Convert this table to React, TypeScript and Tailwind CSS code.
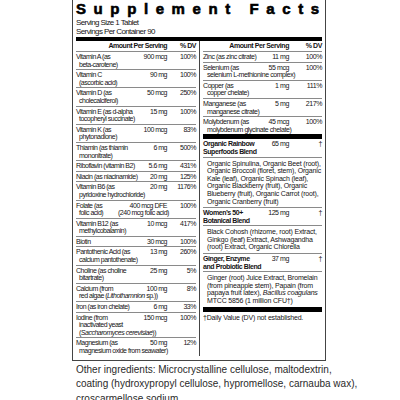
import type { ReactNode } from "react"

type Fact = {
  name: ReactNode
  amt: string
  dv: string
  more?: ReactNode[]
  bold?: boolean
}

const leftRows: Fact[] = [
  { name: "Vitamin A (as", amt: "900 mcg", dv: "100%", more: ["beta-carotene)"] },
  { name: "Vitamin C", amt: "90 mg", dv: "100%", more: ["(ascorbic acid)"] },
  { name: "Vitamin D (as", amt: "50 mcg", dv: "250%", more: ["cholecalciferol)"] },
  { name: "Vitamin E (as d-alpha", amt: "15 mg", dv: "100%", more: ["tocopheryl succinate)"] },
  { name: "Vitamin K (as", amt: "100 mcg", dv: "83%", more: ["phytonadione)"] },
  { name: "Thiamin (as thiamin", amt: "6 mg", dv: "500%", more: ["mononitrate)"] },
  { name: "Riboflavin (vitamin B2)", amt: "5.6 mg", dv: "431%" },
  { name: "Niacin (as niacinamide)", amt: "20 mg", dv: "125%" },
  { name: "Vitamin B6 (as", amt: "20 mg", dv: "1176%", more: ["pyridoxine hydrochloride)"] },
  {
    name: "Folate (as",
    amt: "400 mcg DFE",
    dv: "100%",
    more: [
      <span className="flex">
        <span className="w-[39px]">folic acid)</span>
        <span>(240 mcg folic acid)</span>
      </span>,
    ],
  },
  { name: "Vitamin B12 (as", amt: "10 mcg", dv: "417%", more: ["methylcobalamin)"] },
  { name: "Biotin", amt: "30 mcg", dv: "100%" },
  { name: "Pantothenic Acid (as", amt: "13 mg", dv: "260%", more: ["calcium pantothenate)"] },
  { name: "Choline (as choline", amt: "25 mg", dv: "5%", more: ["bitartrate)"] },
  {
    name: "Calcium (from",
    amt: "100 mg",
    dv: "8%",
    more: [<>red algae (<i>Lithothamnion</i> sp.))</>],
  },
  { name: "Iron (as iron chelate)", amt: "6 mg", dv: "33%" },
  {
    name: "Iodine (from",
    amt: "150 mcg",
    dv: "100%",
    more: ["inactivated yeast", <>(<i>Saccharomyces cerevisiae</i>))</>],
  },
  { name: "Magnesium (as", amt: "50 mg", dv: "12%", more: ["magnesium oxide from seawater)"] },
]

const minerals: Fact[] = [
  { name: "Zinc (as zinc citrate)", amt: "11 mg", dv: "100%" },
  { name: "Selenium (as", amt: "55 mcg", dv: "100%", more: ["selenium L-methionine complex)"] },
  { name: "Copper (as", amt: "1 mg", dv: "111%", more: ["copper chelate)"] },
  { name: "Manganese (as", amt: "5 mg", dv: "217%", more: ["manganese citrate)"] },
  { name: "Molybdenum (as", amt: "45 mcg", dv: "100%", more: ["molybdenum glycinate chelate)"] },
]

function FactRow({ row, dvW, indent, last }: { row: Fact; dvW: string; indent: string; last?: boolean }) {
  return (
    <div className={`py-[1px] ${last ? "" : "border-b border-[#8a8a8a]"}`}>
      <div className="flex leading-[7.6px]">
        <span className={`flex-1 min-w-0 whitespace-nowrap ${row.bold ? "font-bold" : ""}`}>{row.name}</span>
        <span className="whitespace-nowrap">{row.amt}</span>
        <span className={`${dvW} text-right`}>{row.dv}</span>
      </div>
      {row.more?.map((m, i) => (
        <div key={i} className={`${row.bold ? "font-bold" : indent} whitespace-nowrap leading-[7.6px]`}>
          {m}
        </div>
      ))}
    </div>
  )
}

function HeaderRow({ dvW }: { dvW: string }) {
  return (
    <div className="flex h-[11px] leading-[10px] border-b border-[#8a8a8a] font-bold">
      <span className="flex-1 text-right">Amount Per Serving</span>
      <span className={`${dvW} text-right`}>% DV</span>
    </div>
  )
}

// ingredient lists under each blend are set a bit wider than the table rows
function BlendText({ lines, last }: { lines: ReactNode[]; last?: boolean }) {
  return (
    <div className={`pl-[4px] py-[2px] leading-[7.6px] tracking-[-0.025em] ${last ? "" : "border-b border-[#8a8a8a]"}`}>
      {lines.map((l, i) => (
        <div key={i} className="whitespace-nowrap">{l}</div>
      ))}
    </div>
  )
}

export default function App() {
  return (
    <div className="w-[400px] h-[400px] overflow-hidden bg-white text-[#161415] font-['Liberation_Sans',Arial,sans-serif]">
      <div className="ml-[72px] w-[254px] border-x border-b border-[#444] px-[3px] pb-[4px]">
        <div className="h-[18px] text-[15px] leading-[17px] font-bold tracking-[7.6px] whitespace-nowrap text-black [-webkit-text-stroke:0.6px_black]">
          Supplement Facts
        </div>
        <div className="text-[8px] leading-[9px] tracking-[-0.075em]">
          <div>Serving Size 1 Tablet</div>
          <div>Servings Per Container 90</div>
        </div>
        <div className="mt-[1px] h-[4px] bg-black" />

        <div className="flex text-[7px]">
          {/* vitamins column */}
          <div className="w-[120px] tracking-[-0.07em]">
            <HeaderRow dvW="w-[29px]" />
            {leftRows.map((r, i) => (
              <FactRow key={i} row={r} dvW="w-[29px]" indent="pl-[3px]" last={i === leftRows.length - 1} />
            ))}
          </div>

          <div className="w-[7px] flex justify-center">
            <div className="w-px bg-[#444]" />
          </div>

          {/* minerals + blends column */}
          <div className="w-[119px] tracking-[-0.06em]">
            <HeaderRow dvW="w-[33px]" />
            {minerals.map((r, i) => (
              <FactRow key={i} row={r} dvW="w-[33px]" indent="pl-[4px]" last={i === minerals.length - 1} />
            ))}
            <div className="h-[5px] bg-black" />

            <FactRow
              row={{ name: "Organic Rainbow", amt: "65 mg", dv: "†", bold: true, more: ["Superfoods Blend"] }}
              dvW="w-[33px]"
              indent=""
            />
            <BlendText
              lines={[
                "Organic Spinulina, Organic Beet (root),",
                "Organic Broccoli (floret, stem), Organic",
                "Kale (leaf), Organic Spinach (leaf),",
                "Organic Blackberry (fruit), Organic",
                "Blueberry (fruit), Organic Carrot (root),",
                "Organic Cranberry (fruit)",
              ]}
            />
            <FactRow
              row={{ name: "Women’s 50+", amt: "125 mg", dv: "†", bold: true, more: ["Botanical Blend"] }}
              dvW="w-[33px]"
              indent=""
            />
            <BlendText
              lines={[
                "Black Cohosh (rhizome, root) Extract,",
                "Ginkgo (leaf) Extract, Ashwagandha",
                "(root) Extract, Organic Chlorella",
              ]}
            />
            <FactRow
              row={{ name: "Ginger, Enzyme", amt: "37 mg", dv: "†", bold: true, more: ["and Probiotic Blend"] }}
              dvW="w-[33px]"
              indent=""
            />
            <BlendText
              last
              lines={[
                "Ginger (root) Juice Extract, Bromelain",
                "(from pineapple stem), Papain (from",
                <>
                  papaya fruit latex), <i>Bacillus coagulans</i>
                </>,
                "MTCC 5856 (1 million CFU†)",
              ]}
            />
            <div className="h-[5px] bg-black" />
            <div className="pt-[2px] leading-[7.6px] tracking-[-0.025em]">†Daily Value (DV) not established.</div>
          </div>
        </div>
      </div>

      <p className="ml-[76px] mt-[2px] text-[10px] leading-[14.5px] whitespace-nowrap text-[#2a2a2a]">
        Other ingredients: Microcrystalline cellulose, maltodextrin,
        <br />
        coating (hydroxypropyl cellulose, hypromellose, carnauba wax),
        <br />
        croscarmellose sodium.
      </p>
    </div>
  )
}
